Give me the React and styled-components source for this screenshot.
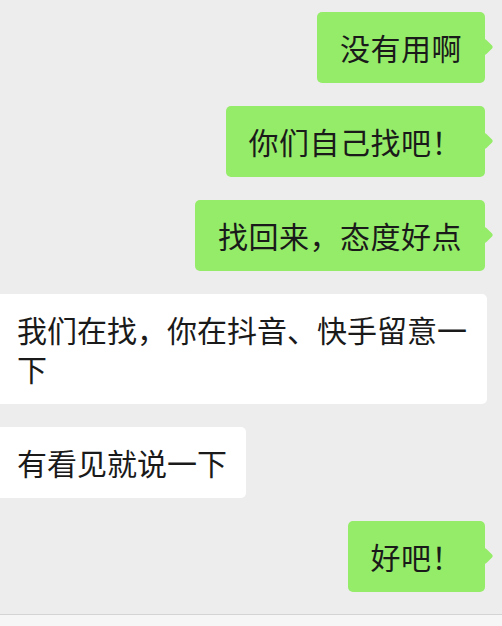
import React from 'react';
import styled, { createGlobalStyle } from 'styled-components';

const GlobalStyle = createGlobalStyle`
    html, body {
        margin: 0;
        padding: 0;
        background: #ededed;
    }
`;

const Page = styled.div`
    width: 502px;
    height: 626px;
    display: flex;
    flex-direction: column;
    overflow: hidden;
    background: #ededed;
    font-family: "Noto Sans CJK SC", "Noto Sans", sans-serif;
    color: #1a1a1a;
`;

const Chat = styled.div`
    flex: 1;
    display: flex;
    flex-direction: column;
    gap: 23px;
    padding-top: 12px;
`;

const Row = styled.div`
    display: flex;
    justify-content: ${p => (p.mine ? 'flex-end' : 'flex-start')};
    padding-right: ${p => (p.mine ? '17px' : '15px')};
`;

const Bubble = styled.div`
    position: relative;
    font-size: 30px;
    line-height: 39px;
    padding: 16px 23px;
    border-radius: 5px;
    background: ${p => (p.mine ? '#95ec69' : '#ffffff')};
    letter-spacing: ${p => (p.mine ? '0.5px' : '0')};

    ${p => p.mine && `
        &::after {
            content: "";
            position: absolute;
            right: -6px;
            top: 29px;
            width: 12px;
            height: 12px;
            border-radius: 2px;
            background: #95ec69;
            transform: rotate(45deg);
        }
    `}

    ${p => !p.mine && `
        margin-left: -8px;
        padding-left: 25px;
        padding-right: 19px;
        max-width: 451px;
    `}
`;

const Footer = styled.div`
    height: 11px;
    border-top: 1px solid #d4d4d4;
    background: #f6f6f6;
`;

const messages = [
    { mine: true, text: '没有用啊' },
    { mine: true, text: '你们自己找吧！' },
    { mine: true, text: '找回来，态度好点' },
    { mine: false, text: '我们在找，你在抖音、快手留意一下' },
    { mine: false, text: '有看见就说一下' },
    { mine: true, text: '好吧！' },
];

export default function App() {
    return (
        <Page>
            <GlobalStyle />
            <Chat>
                {messages.map((m, i) => (
                    <Row key={i} mine={m.mine}>
                        <Bubble mine={m.mine}>{m.text}</Bubble>
                    </Row>
                ))}
            </Chat>
            <Footer />
        </Page>
    );
}
